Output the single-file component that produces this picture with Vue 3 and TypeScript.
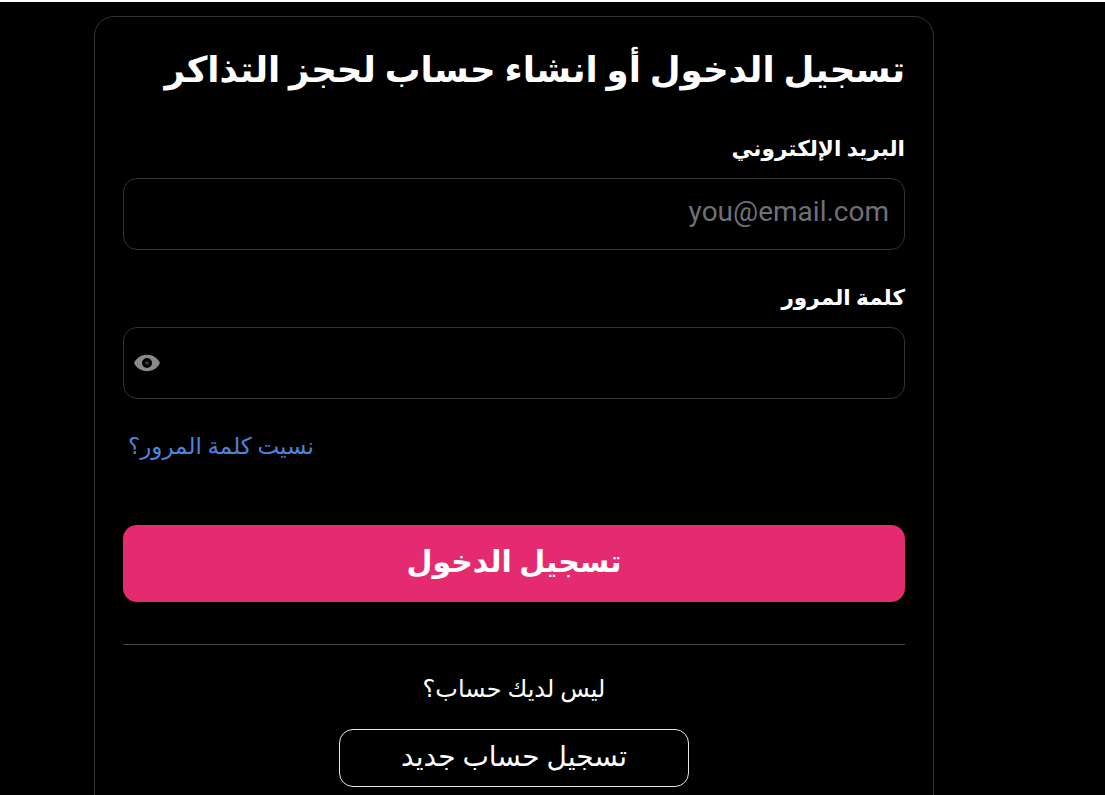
<script setup lang="ts">
const title: string = 'تسجيل الدخول أو انشاء حساب لحجز التذاكر'
</script>

<template>
  <main class="page" dir="rtl">
    <form class="card" @submit.prevent>
      <h1 class="title">{{ title }}</h1>
      <label class="label" for="email">البريد الإلكتروني</label>
      <input id="email" class="input" type="email" placeholder="you@email.com" />
      <label class="label label-pass" for="pass">كلمة المرور</label>
      <div class="pass-wrap">
        <input id="pass" class="input" type="password" />
        <svg class="eye" viewBox="0 0 28 18" aria-hidden="true">
          <path fill-rule="evenodd" d="M14 .8C8.2.8 3.2 4.2 1 9c2.200 4.800 7.200 8.200 13 8.200S24.800 13.800 27 9C24.800 4.200 19.800.8 14 .8zM14 14a5 5 0 1 1 0-10 5 5 0 0 1 0 10z" />
          <circle class="pupil" cx="14" cy="9" r="1.800" />
        </svg>
      </div>
      <a class="forgot" href="#">نسيت كلمة المرور؟</a>
      <button class="submit" type="submit">تسجيل الدخول</button>
      <hr class="divider" />
      <p class="no-account">ليس لديك حساب؟</p>
      <button class="register" type="button">تسجيل حساب جديد</button>
    </form>
  </main>
</template>

<style scoped>
.page {
  box-sizing: border-box;
  height: 795px;
  overflow: hidden;
  background: #000;
  border-top: 2px solid #fff;
  padding: 14px 171px 0 94px;
  font-family: Roboto, "DejaVu Sans", sans-serif;
  color: #fff;
}
.card {
  box-sizing: border-box;
  height: 900px;
  padding: 28px;
  border: 1px solid #333;
  border-radius: 20px;
  display: flex;
  flex-direction: column;
}
.title {
  margin: 0;
  font-size: 35.6px;
  line-height: 50px;
  font-weight: 700;
}
.label {
  margin-top: 37px;
  font-size: 21.6px;
  line-height: 34px;
  font-weight: 700;
  height: 46px;
}
.label-pass {
  margin-top: 31px;
}
.input {
  box-sizing: border-box;
  display: block;
  width: 100%;
  height: 72px;
  padding: 0 15px 5px;
  background: #000;
  border: 1px solid #333;
  border-radius: 14px;
  color: #fff;
  font-family: inherit;
  font-size: 28px;
  outline: none;
}
.input::placeholder {
  color: #6f6f77;
  opacity: 1;
}
.pass-wrap {
  position: relative;
}
.eye {
  position: absolute;
  left: 10px;
  top: 27px;
  width: 28px;
  height: 18px;
  fill: #8a8a8a;
}
.pupil {
  fill: #3c3c3c;
}
.forgot {
  margin: 33px 0 0 5px;
  align-self: flex-end;
  font-size: 23px;
  line-height: 30px;
  color: #4f83dc;
  text-decoration: none;
}
.submit {
  margin-top: 63px;
  height: 77px;
  padding: 0 0 4px;
  border: 0;
  border-radius: 14px;
  background: #e52b6f;
  color: #fff;
  font-family: inherit;
  font-size: 30px;
  font-weight: 700;
}
.divider {
  width: 100%;
  margin: 42px 0 0;
  border: 0;
  border-top: 1px solid #444;
}
.no-account {
  margin: 29px 0 0;
  text-align: center;
  font-size: 24px;
  line-height: 30px;
}
.register {
  margin-top: 25px;
  align-self: center;
  width: 350px;
  height: 58px;
  padding: 0 0 4px;
  background: #000;
  border: 1px solid #e6e6e6;
  border-radius: 14px;
  color: #fff;
  font-family: inherit;
  font-size: 28px;
}
</style>
